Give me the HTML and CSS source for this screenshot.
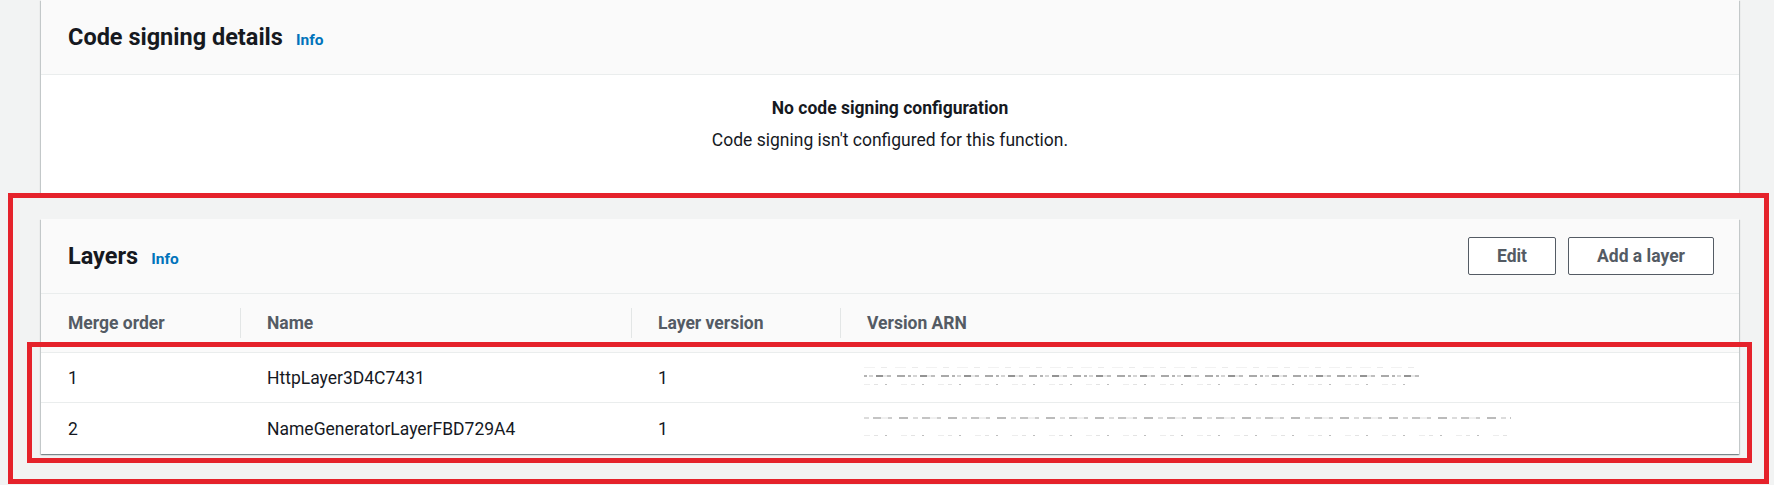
FILE: index.html
```html
<!DOCTYPE html>
<html lang="en">
<head>
<meta charset="utf-8">
<title>Lambda function configuration</title>
<link rel="stylesheet" href="styles.css">
</head>
<body>
<div class="page">
  <section class="panel panel-code">
    <header class="panel-header">
      <div class="title-group">
        <h2 class="panel-title">Code signing details</h2>
        <a class="info" href="#">Info</a>
      </div>
    </header>
    <div class="empty">
      <div class="empty-title">No code signing configuration</div>
      <div class="empty-text">Code signing isn't configured for this function.</div>
    </div>
  </section>

  <section class="panel panel-layers">
    <header class="panel-header">
      <div class="title-group">
        <h2 class="panel-title">Layers</h2>
        <a class="info" href="#">Info</a>
      </div>
      <div class="actions">
        <button class="btn">Edit</button>
        <button class="btn">Add a layer</button>
      </div>
    </header>
    <div class="table">
      <div class="row head">
        <div class="cell">Merge order</div>
        <div class="cell sep">Name</div>
        <div class="cell sep">Layer version</div>
        <div class="cell sep">Version ARN</div>
      </div>
      <div class="row body-row r1">
        <div class="cell">1</div>
        <div class="cell">HttpLayer3D4C7431</div>
        <div class="cell">1</div>
        <div class="cell arn arn-1" aria-hidden="true"><span class="blur veil w1"></span><span class="blur dark w1"></span><span class="blur faint w1"></span></div>
      </div>
      <div class="row body-row r2">
        <div class="cell">2</div>
        <div class="cell">NameGeneratorLayerFBD729A4</div>
        <div class="cell">1</div>
        <div class="cell arn arn-2" aria-hidden="true"><span class="blur mid w2"></span><span class="blur faint w2"></span></div>
      </div>
    </div>
  </section>

  <div class="annot annot-outer"></div>
  <div class="annot annot-inner"></div>
</div>
</body>
</html>
```

FILE: styles.css
```css
html, body {
  margin: 0;
  padding: 0;
}

body {
  background: #f2f3f3;
  font-family: Roboto, "Liberation Sans", Arial, sans-serif;
  color: #16191f;
  font-size: 17.5px;
}

.page {
  position: relative;
  width: 1774px;
  height: 485px;
  box-sizing: border-box;
  padding: 0 35px 0 41px;
  display: flex;
  flex-direction: column;
  gap: 25px;
  overflow: hidden;
}

.panel {
  background: #ffffff;
  box-shadow: 0 1px 1px 0 rgba(0, 28, 36, 0.3),
              1px 1px 1px 0 rgba(0, 28, 36, 0.15),
              -1px 1px 1px 0 rgba(0, 28, 36, 0.15);
  flex: none;
}

.panel-code {
  height: 194px;
}

.panel-header {
  height: 75px;
  box-sizing: border-box;
  background: #fafafa;
  border-bottom: 1px solid #eaeded;
  display: flex;
  align-items: center;
  justify-content: space-between;
  padding: 0 25px 0 27px;
}

.title-group {
  display: flex;
  align-items: baseline;
  gap: 13px;
}

.panel-title {
  margin: 0;
  font-size: 23.5px;
  font-weight: 700;
  color: #16191f;
}

.info {
  font-size: 15.5px;
  font-weight: 700;
  color: #0073bb;
  text-decoration: none;
}

.empty {
  display: flex;
  flex-direction: column;
  align-items: center;
  padding-top: 20px;
  gap: 6px;
}

.empty-title {
  font-weight: 700;
  line-height: 26px;
}

.empty-text {
  line-height: 26px;
}

.actions {
  display: flex;
  gap: 12px;
}

.btn {
  font-family: inherit;
  font-size: 17.5px;
  font-weight: 700;
  color: #545b64;
  background: #ffffff;
  border: 1px solid #545b64;
  border-radius: 2px;
  height: 38px;
  padding: 0 28px;
  cursor: pointer;
}

.table {
  display: flex;
  flex-direction: column;
}

.row {
  display: grid;
  grid-template-columns: 199px 391px 209px 1fr;
}

.row.head {
  height: 59px;
  box-sizing: border-box;
  background: #fafafa;
  border-bottom: 1px solid #eaeded;
  color: #545b64;
  font-weight: 700;
}

.body-row {
  height: 50px;
  box-sizing: border-box;
}

.r1 {
  border-bottom: 1px solid #eaeded;
}

.r2 {
  height: 51px;
}

.cell {
  position: relative;
  display: flex;
  align-items: center;
  padding-left: 27px;
}

.cell.sep::before {
  content: "";
  position: absolute;
  left: 0;
  top: 14px;
  width: 1px;
  height: 30px;
  background: #e3e6e6;
}

.arn {
  flex-direction: column;
  align-items: flex-start;
  padding-left: 24px;
}

.arn-1 {
  padding-top: 14px;
  gap: 7px;
}

.arn-2 {
  padding-top: 14px;
  gap: 16px;
}

.blur {
  display: block;
}

.w1 {
  width: 555px;
}

.w2 {
  width: 647px;
}

.blur.veil {
  height: 1px;
  background: repeating-linear-gradient(90deg,
    rgba(90, 90, 90, 0.08) 0 11px,
    transparent 11px 17px,
    rgba(90, 90, 90, 0.12) 17px 23px,
    transparent 23px 31px);
}

.blur.dark {
  height: 2px;
  background: repeating-linear-gradient(90deg,
    rgba(40, 40, 40, 0.35) 0 3px,
    transparent 3px 5px,
    rgba(40, 40, 40, 0.2) 5px 9px,
    transparent 9px 12px,
    rgba(40, 40, 40, 0.5) 12px 19px,
    rgba(40, 40, 40, 0.1) 19px 23px,
    rgba(40, 40, 40, 0.3) 23px 27px,
    transparent 27px 33px,
    rgba(40, 40, 40, 0.4) 33px 41px,
    transparent 41px 44px);
}

.blur.mid {
  height: 2px;
  background: repeating-linear-gradient(90deg,
    rgba(60, 60, 60, 0.18) 0 5px,
    transparent 5px 9px,
    rgba(60, 60, 60, 0.3) 9px 17px,
    rgba(60, 60, 60, 0.08) 17px 24px,
    rgba(60, 60, 60, 0.25) 24px 28px,
    transparent 28px 35px,
    rgba(60, 60, 60, 0.35) 35px 44px,
    transparent 44px 49px);
}

.blur.faint {
  height: 1px;
  background: repeating-linear-gradient(90deg,
    rgba(80, 80, 80, 0.1) 0 6px,
    transparent 6px 10px,
    rgba(80, 80, 80, 0.16) 10px 14px,
    transparent 14px 21px,
    rgba(40, 40, 40, 0.3) 21px 23px,
    transparent 23px 37px);
}

.annot {
  position: absolute;
  border: 5px solid #e5222b;
  box-sizing: border-box;
  pointer-events: none;
}

.annot-outer {
  left: 8px;
  top: 193px;
  width: 1761px;
  height: 291px;
}

.annot-inner {
  left: 27px;
  top: 342px;
  width: 1725px;
  height: 121px;
}
```
